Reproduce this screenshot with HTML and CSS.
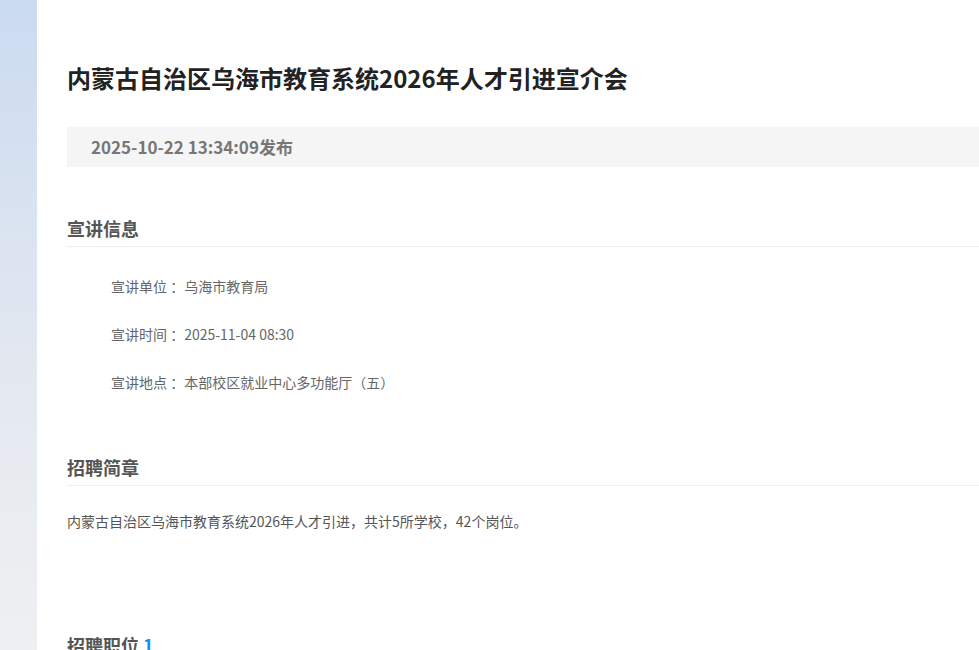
FILE: index.html
```html
<!DOCTYPE html>
<html lang="zh-CN">
<head>
    <meta charset="UTF-8">
    <meta name="viewport" content="width=device-width, initial-scale=1.0">
    <title>宣讲会详情</title>
    <link rel="stylesheet" href="styles.css">
</head>
<body>
    <div class="page">
        <aside class="side"></aside>
        <main class="content">
            <h1 class="title">内蒙古自治区乌海市教育系统2026年人才引进宣介会</h1>
            <div class="publish">2025-10-22 13:34:09发布</div>

            <h2 class="section-title">宣讲信息</h2>
            <ul class="info">
                <li><span class="label">宣讲单位 ：</span><span class="value">乌海市教育局</span></li>
                <li><span class="label">宣讲时间 ：</span><span class="value">2025-11-04 08:30</span></li>
                <li><span class="label">宣讲地点 ：</span><span class="value">本部校区就业中心多功能厅（五）</span></li>
            </ul>

            <h2 class="section-title">招聘简章</h2>
            <p class="intro">内蒙古自治区乌海市教育系统2026年人才引进，共计5所学校，42个岗位。</p>

            <h2 class="section-title jobs">招聘职位 <span class="count">1</span></h2>
        </main>
    </div>
</body>
</html>
```

FILE: styles.css
```css
* {
    margin: 0;
    padding: 0;
    box-sizing: border-box;
}

body {
    background-color: #fff;
    font-family: "Noto Sans CJK SC", "Noto Sans", sans-serif;
    overflow: hidden;
}

.page {
    display: flex;
    min-height: 100vh;
}

.side {
    flex: 0 0 37px;
    background: linear-gradient(to bottom, #cbdbf0 0%, #e3e8f0 55%, #eff0f2 100%);
}

.content {
    flex: 1;
    padding: 60px 0 0 30px;
    min-width: 0;
}

.title {
    font-size: 24px;
    line-height: 36px;
    font-weight: bold;
    color: #222;
    white-space: nowrap;
}

.publish {
    margin-top: 31px;
    height: 40px;
    line-height: 40px;
    padding-left: 24px;
    background-color: #f5f5f5;
    font-size: 17px;
    font-weight: bold;
    color: #777;
}

.section-title {
    margin-top: 46px;
    font-size: 18px;
    line-height: 30px;
    font-weight: bold;
    color: #555;
    padding-bottom: 3px;
    border-bottom: 1px solid #eee;
}

.info {
    list-style: none;
    padding: 15px 0 0 44px;
}

.info li {
    height: 48px;
    line-height: 48px;
    font-size: 14px;
    color: #666;
}

.intro {
    margin-top: 23px;
    font-size: 14px;
    line-height: 24px;
    color: #555;
}

.jobs {
    margin-top: 97px;
    border-bottom: none;
}

.count {
    color: #1e88f5;
}
```
